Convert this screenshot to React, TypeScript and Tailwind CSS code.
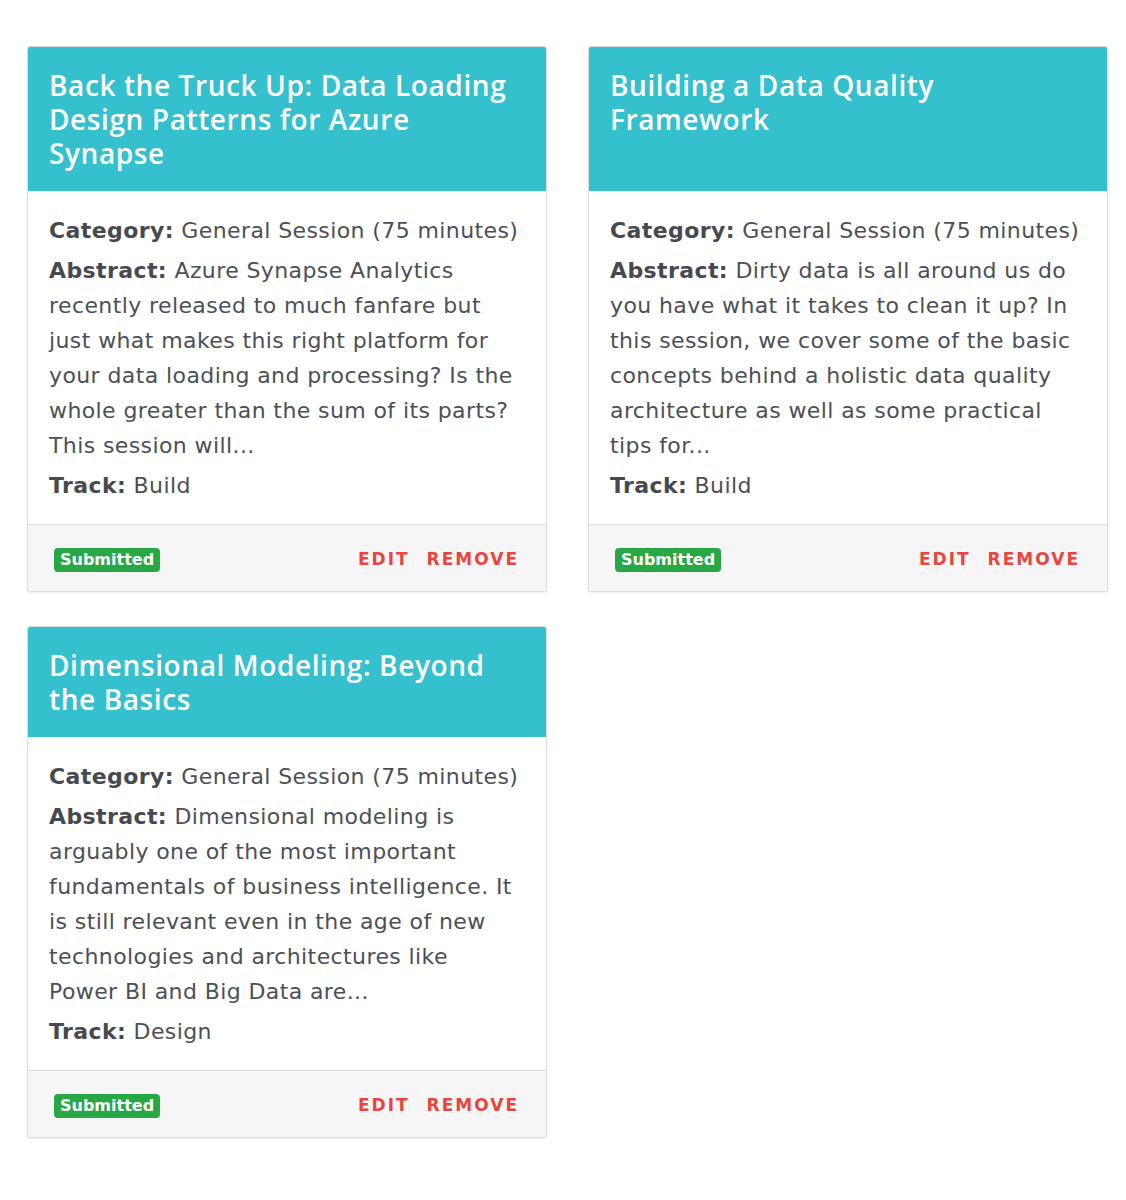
import React from 'react';

type Session = {
  title: string;
  category: string;
  abstract: string;
  track: string;
};

const SESSIONS: Session[] = [
  {
    title: 'Back the Truck Up: Data Loading Design Patterns for Azure Synapse',
    category: 'General Session (75 minutes)',
    abstract:
      'Azure Synapse Analytics recently released to much fanfare but just what makes this right platform for your data loading and processing? Is the whole greater than the sum of its parts? This session will...',
    track: 'Build',
  },
  {
    title: 'Building a Data Quality Framework',
    category: 'General Session (75 minutes)',
    abstract:
      'Dirty data is all around us do you have what it takes to clean it up? In this session, we cover some of the basic concepts behind a holistic data quality architecture as well as some practical tips for...',
    track: 'Build',
  },
  {
    title: 'Dimensional Modeling: Beyond the Basics',
    category: 'General Session (75 minutes)',
    abstract:
      'Dimensional modeling is arguably one of the most important fundamentals of business intelligence. It is still relevant even in the age of new technologies and architectures like Power BI and Big Data are...',
    track: 'Design',
  },
];

function SessionCard({ session }: { session: Session }) {
  return (
    <div className="flex flex-col rounded-[3px] border border-[#dcdcdc] bg-white shadow-[0_1px_2px_rgba(0,0,0,0.08)] overflow-hidden">
      {/* Title */}
      <div className="flex-1 bg-[#35c0cd] px-[21px] pt-[21px] pb-[21px]">
        <h2 className="font-['Open_Sans',sans-serif] text-[28px] leading-[34px] font-semibold tracking-[0.6px] text-white">
          {session.title}
        </h2>
      </div>

      {/* Details */}
      <div className="pl-[21px] pr-[26px] pt-[22px] pb-[21px] text-[22px] leading-[35px] tracking-[0.4px] text-[#4b5056] flex flex-col gap-[5px]">
        <p>
          <span className="font-bold text-[#464a50]">Category:</span> {session.category}
        </p>
        <p>
          <span className="font-bold text-[#464a50]">Abstract:</span> {session.abstract}
        </p>
        <p>
          <span className="font-bold text-[#464a50]">Track:</span> {session.track}
        </p>
      </div>

      {/* Footer */}
      <div className="flex items-center justify-between border-t border-[#dcdcdc] bg-[#f6f6f6] h-[67px] pt-[4px] pl-[26px] pr-[27px]">
        <span className="rounded-[4px] bg-[#28a745] px-[6px] py-[1px] text-[16px] leading-[22px] font-bold text-white">
          Submitted
        </span>
        <div className="flex items-center gap-[17px] text-[17px] font-bold tracking-[2px] text-[#e8453f]">
          <button className="uppercase">Edit</button>
          <button className="uppercase">Remove</button>
        </div>
      </div>
    </div>
  );
}

export default function App() {
  return (
    <div className="min-h-screen bg-white pt-[46px] pl-[27px] font-['DejaVu_Sans',sans-serif]">
      <div className="grid w-[1081px] grid-cols-2 gap-x-[41px] gap-y-[34px]">
        {SESSIONS.map(s => (
          <SessionCard key={s.title} session={s} />
        ))}
      </div>
    </div>
  );
}
